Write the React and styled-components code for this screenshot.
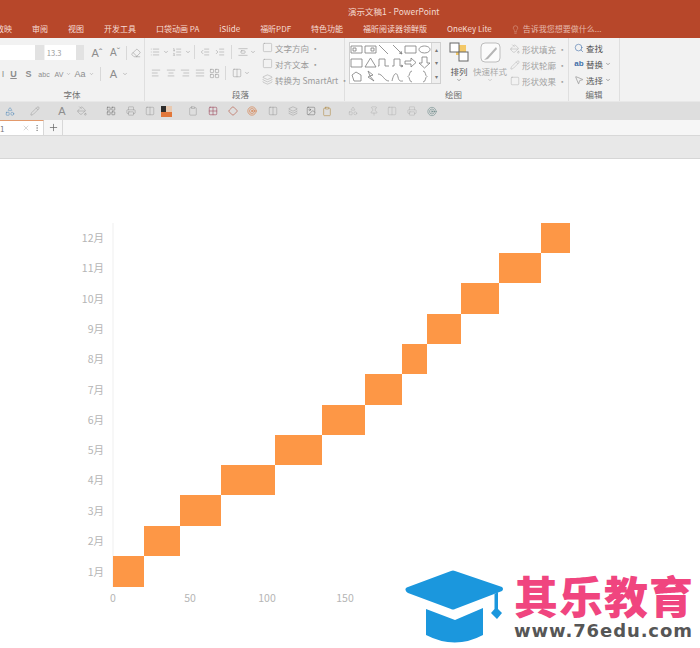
import React from 'react';
import styled, { createGlobalStyle } from 'styled-components';
import {
  List, ListOrdered, IndentDecrease, IndentIncrease, AlignLeft, AlignCenter, AlignRight, AlignJustify,
  Columns2, Lightbulb, Search, MousePointer2, PaintBucket, Pencil, Square, X, Plus, ChevronDown, EllipsisVertical,
  Eraser, LayoutGrid, Printer, Shapes, Target, Clipboard, Image, Layers, Diamond, Pin, Grid2x2, AlignVerticalSpaceAround,
} from 'lucide-react';

const GlobalStyle = createGlobalStyle`
  html, body { margin: 0; padding: 0; background: #fff; }
  body { font-family: "Noto Sans CJK SC", "Liberation Sans", sans-serif; overflow: hidden; }
`;

const Page = styled.div`
  position: relative;
  width: 700px;
  height: 648px;
  overflow: hidden;
  display: flex;
  flex-direction: column;
`;

const TitleBar = styled.header`
  height: 38px;
  flex: none;
  background: #b7472a;
  color: #f6ddd5;
  display: flex;
  flex-direction: column;
`;

const DocTitle = styled.div`
  height: 22px;
  padding-left: 348px;
  font-size: 8.5px;
  line-height: 23px;
  color: #f3d9d0;
`;

const Tabs = styled.nav`
  display: flex;
  gap: 20px;
  margin-left: -4px;
  font-size: 8px;
  line-height: 14px;
  white-space: nowrap;
`;

const TellMe = styled.span`
  display: flex;
  align-items: center;
  gap: 3px;
  margin-left: -1px;
  opacity: 0.75;
`;

const Ribbon = styled.section`
  height: 63px;
  flex: none;
  background: #f2f2f2;
  display: flex;
`;

const Group = styled.div`
  width: ${p => p.$w}px;
  flex: none;
  position: relative;
  display: flex;
  flex-direction: column;
  border-right: 1px solid #dfdfdf;
  box-sizing: border-box;
`;

const GroupBody = styled.div`
  height: 50px;
  display: flex;
  flex-direction: ${p => p.$dir || 'row'};
  padding: ${p => p.$pad || '0'};
  box-sizing: border-box;
`;

const GroupLabel = styled.div`
  height: 13px;
  font-size: 8.5px;
  line-height: 13px;
  color: #6f6f6f;
  text-align: center;
  padding-right: ${p => p.$shift || 0}px;
`;

const ToolRow = styled.div`
  display: flex;
  align-items: center;
  height: ${p => p.$h || 18}px;
  margin-top: ${p => p.$top || 0}px;
  color: #8a8a8a;
`;

const FontBox = styled.div`
  width: ${p => p.$w}px;
  height: 15px;
  background: #fff;
  font-size: 7.5px;
  line-height: 15px;
  color: #9a9a9a;
  padding-left: 2px;
  box-sizing: border-box;
`;

const BoxArrow = styled.div`
  width: 9px;
  height: 15px;
  background: #e2e2e2;
  margin-right: ${p => p.$after || 0}px;
`;

const Glyph = styled.span`
  font-family: "Liberation Sans", sans-serif;
  font-size: ${p => p.$size || 9}px;
  font-weight: ${p => (p.$bold ? 700 : 400)};
  color: ${p => p.$color || '#8d8d8d'};
  width: ${p => p.$w || 15}px;
  text-align: center;
  text-decoration: ${p => (p.$line ? 'underline' : 'none')};
  flex: none;
`;

const Sep = styled.i`
  display: block;
  width: 1px;
  height: 14px;
  background: #d8d8d8;
  margin: 0 ${p => p.$m || 4}px;
  flex: none;
`;

const Cell = styled.span`
  width: ${p => p.$w || 15}px;
  flex: none;
  display: flex;
  align-items: center;
  justify-content: ${p => p.$justify || 'center'};
  color: ${p => p.$color || '#8d8d8d'};
`;

const SideCommands = styled.div`
  display: flex;
  flex-direction: column;
  gap: 3px;
  padding-left: ${p => p.$left || 0}px;
`;

const SideCommand = styled.div`
  display: flex;
  align-items: center;
  gap: 2px;
  height: 13px;
  font-size: 8.5px;
  color: ${p => p.$color || '#a2a2a2'};
  white-space: nowrap;
`;

const Gallery = styled.div`
  width: 92px;
  height: 42px;
  flex: none;
  margin-left: 4px;
  background: #fff;
  border: 1px solid #cfcfcf;
  box-sizing: border-box;
  display: grid;
  grid-template-columns: repeat(6, 13.5px) 1fr;
  grid-template-rows: repeat(3, 1fr);
`;

const ShapeCell = styled.svg`
  grid-column: ${p => p.$col};
  grid-row: ${p => p.$row};
  width: 13px;
  height: 13px;
  align-self: center;
  justify-self: center;
  fill: none;
  stroke: #7c7c7c;
  stroke-width: 0.8;
`;

const Scroll = styled.div`
  grid-column: 7;
  grid-row: ${p => p.$row};
  background: #efefef;
  border-left: 1px solid #d6d6d6;
  font-size: 6px;
  line-height: 13px;
  text-align: center;
  color: #777;
`;

const BigCommand = styled.div`
  width: ${p => p.$w}px;
  flex: none;
  display: flex;
  flex-direction: column;
  align-items: center;
  font-size: 8.5px;
  line-height: 11px;
  color: ${p => p.$color};
  margin-left: ${p => p.$left || 0}px;
`;

const BigLabel = styled.div`
  margin-top: ${p => p.$top}px;
`;

const QuickBar = styled.div`
  height: 19px;
  flex: none;
  background: #dedede;
  border-top: 1px solid #e8e8e8;
  box-sizing: border-box;
  display: flex;
  align-items: center;
`;

const QuickItem = styled.span`
  width: 10px;
  height: 10px;
  flex: none;
  margin-left: ${p => p.$gap}px;
  display: flex;
  align-items: center;
  justify-content: center;
  color: ${p => p.$color || '#8a8a8a'};
`;

const Swatch = styled.span`
  width: 11px;
  height: 11px;
  flex: none;
  margin-left: 6px;
  background: linear-gradient(90deg, #2d2d2d 50%, #e9c9b0 50%);
  border-bottom: 5px solid #e2773a;
  box-sizing: border-box;
`;

const TabStrip = styled.div`
  height: 16px;
  flex: none;
  background: #f6f6f6;
  border-bottom: 1px solid #d8d8d8;
  box-sizing: border-box;
  display: flex;
`;

const SlideTab = styled.div`
  width: 44px;
  background: #fff;
  border-top: 1px solid #e39a6c;
  border-right: 1px solid #d8d8d8;
  box-sizing: border-box;
  display: flex;
  align-items: center;
  font-size: 8px;
  color: #777;
`;

const Kebab = styled.span`
  margin-left: 3px;
  display: flex;
  color: #777;
`;

const AddTab = styled.div`
  width: 18px;
  border-right: 1px solid #d8d8d8;
  display: flex;
  align-items: center;
  justify-content: center;
  color: #666;
`;

const GreyBand = styled.div`
  height: 23px;
  flex: none;
  background: #e8e8e8;
  border-bottom: 1px solid #d6d6d6;
  box-sizing: border-box;
`;

const Slide = styled.main`
  flex: 1;
  background: #fff;
`;

const ChartSvg = styled.svg`
  display: block;
  width: 700px;
  height: 489px;
  opacity: 0.99;
  text {
    font-family: "Noto Sans CJK SC", "Liberation Sans", sans-serif;
    font-size: 10.5px;
    fill: #b5b5b5;
  }
`;

const Watermark = styled.div`
  position: absolute;
  left: 405px;
  top: 570px;
  width: 295px;
  height: 74px;
  display: flex;
  gap: 9px;
`;

const CapIcon = styled.svg`
  flex: none;
  fill: #1b97dd;
`;

const BrandText = styled.div`
  display: flex;
  flex-direction: column;
`;

const BrandName = styled.div`
  font-size: 44px;
  line-height: 50px;
  font-weight: 900;
  letter-spacing: 1px;
  color: #f0457f;
  white-space: nowrap;
`;

const BrandUrl = styled.div`
  font-family: "DejaVu Sans", sans-serif;
  font-size: 18px;
  line-height: 22px;
  font-weight: 700;
  letter-spacing: 0.9px;
  color: #565656;
  white-space: nowrap;
`;

const tabNames = ['放映', '审阅', '视图', '开发工具', '口袋动画 PA', 'iSlide', '福昕PDF', '特色功能', '福昕阅读器领鲜版', 'OneKey Lite'];

const shapes = [
  'M1 3h11v7H1zM3 5h3v3H3z', 'M1 3h11v7H1zM7 5h3v3H7z', 'M2 2l9 9', 'M2 2l9 9M11 11l-3-1M11 11l-1-3', 'M1 3h11v7H1z', 'M6.5 3a5.5 3.5 0 1 0 .01 0z',
  'M1 3h11v8H1z', 'M6.5 2l5.5 9H1z', 'M1 10h1V3h6v7h4', 'M1 10h2V3h6v7h3M12 10l-2-1M12 10l-2 1', 'M1 5h6V2l5 4.5L7 11V8H1z', 'M4 1h5v6h3l-5.500 5L1 7h3z',
  'M2 5l4-3 5 3v6H4z', 'M4 1l5 4-3 1 4 5-6-4 2-1z', 'M1 4c5 0 6 7 11 7', 'M1 11c2-9 5-9 6-4s3 4 5 4', 'M8 1C5 1 6 6 4 6.500 6 7 5 12 8 12', 'M5 1c3 0 2 5 4 5.500C7 7 8 12 5 12',
];

const bars = [
  [113, 556, 31, 31], [144, 526, 36, 30], [180, 495, 41, 31], [221, 465, 54, 30],
  [275, 435, 47, 30], [322, 405, 43, 30], [365, 374, 37, 31], [402, 344, 25, 30],
  [427, 314, 34, 30], [461, 283, 38, 31], [499, 253, 42, 30], [541, 223, 29, 30],
];

const ticks = [[113, '0'], [190, '50'], [267, '100'], [345, '150']];

const Caret = () => <ChevronDown size={6} strokeWidth={2} />;

const FontGroup = () => (
  <Group $w={145}>
    <GroupBody $dir="column" $pad="7px 0 0">
      <ToolRow $h={15}>
        <FontBox $w={38} />
        <BoxArrow $after={1} />
        <FontBox $w={33}>13.3</FontBox>
        <BoxArrow $after={4} />
        <Glyph $size={11} $w={18}>Aˆ</Glyph>
        <Glyph $size={10} $w={18}>Aˇ</Glyph>
        <Sep $m={2} />
        <Cell $w={15}><Eraser size={10} strokeWidth={1.2} /></Cell>
      </ToolRow>
      <ToolRow $top={5}>
        <Glyph $w={6}>I</Glyph>
        <Glyph $line $w={15} $bold>U</Glyph>
        <Glyph $w={15} $bold>S</Glyph>
        <Glyph $size={7} $w={16}>abc</Glyph>
        <Glyph $size={7} $w={14}>AV</Glyph>
        <Cell $w={5}><Caret /></Cell>
        <Glyph $w={18}>Aa</Glyph>
        <Cell $w={5}><Caret /></Cell>
        <Sep $m={6} />
        <Glyph $size={11} $w={13}>A</Glyph>
        <Cell $w={10}><Caret /></Cell>
      </ToolRow>
    </GroupBody>
    <GroupLabel>字体</GroupLabel>
  </Group>
);

const ParagraphGroup = () => (
  <Group $w={200}>
    <GroupBody $pad="3px 0 0 4px">
      <div>
        <ToolRow $h={14} $top={4}>
          <Cell $w={12}><List size={10} strokeWidth={1.1} /></Cell>
          <Cell $w={9}><Caret /></Cell>
          <Cell $w={13}><ListOrdered size={10} strokeWidth={1.1} /></Cell>
          <Cell $w={9}><Caret /></Cell>
          <Sep $m={2} />
          <Cell $w={15}><IndentDecrease size={10} strokeWidth={1.1} /></Cell>
          <Cell $w={15}><IndentIncrease size={10} strokeWidth={1.1} /></Cell>
          <Sep $m={4} />
          <Cell $w={13}><AlignVerticalSpaceAround size={10} strokeWidth={1.1} /></Cell>
          <Cell $w={8}><Caret /></Cell>
        </ToolRow>
        <ToolRow $top={5}>
          <Cell $w={14.5}><AlignLeft size={10} strokeWidth={1.1} /></Cell>
          <Cell $w={14.5}><AlignCenter size={10} strokeWidth={1.1} /></Cell>
          <Cell $w={14.5}><AlignRight size={10} strokeWidth={1.1} /></Cell>
          <Cell $w={14.5}><AlignJustify size={10} strokeWidth={1.1} /></Cell>
          <Cell $w={14}><LayoutGrid size={11} strokeWidth={1.1} /></Cell>
          <Sep $m={4} />
          <Cell $w={14}><Columns2 size={10} strokeWidth={1.1} /></Cell>
          <Cell $w={6}><Caret /></Cell>
        </ToolRow>
      </div>
      <SideCommands $left={5}>
        <SideCommand $color="#9a9a9a"><Square size={11} strokeWidth={1} />文字方向 ·</SideCommand>
        <SideCommand $color="#9a9a9a"><Square size={11} strokeWidth={1} />对齐文本 ·</SideCommand>
        <SideCommand $color="#9a9a9a"><Layers size={11} strokeWidth={1} />转换为 SmartArt ·</SideCommand>
      </SideCommands>
    </GroupBody>
    <GroupLabel $shift={8}>段落</GroupLabel>
  </Group>
);

const DrawingGroup = () => (
  <Group $w={224}>
    <GroupBody $pad="4px 0 0 0">
      <Gallery>
        {shapes.map((d, i) => (
          <ShapeCell key={i} viewBox="0 0 13 13" $col={(i % 6) + 1} $row={Math.floor(i / 6) + 1}>
            <path d={d} />
          </ShapeCell>
        ))}
        <Scroll $row={1}>▴</Scroll>
        <Scroll $row={2}>▾</Scroll>
        <Scroll $row={3}>▾</Scroll>
      </Gallery>
      <BigCommand $w={24} $left={6} $color="#555">
        <svg width="20" height="20" viewBox="0 0 20 20">
          <rect x="7" y="3" width="10" height="10" fill="#f3c867" />
          <rect x="1" y="1" width="9" height="9" fill="#fff" stroke="#666" />
          <rect x="10" y="10" width="9" height="9" fill="#fff" stroke="#666" />
        </svg>
        <BigLabel $top={4}>排列</BigLabel>
        <Caret />
      </BigCommand>
      <BigCommand $w={34} $left={2} $color="#a8a8a8">
        <svg width="21" height="21" viewBox="0 0 21 21">
          <rect x="1" y="1" width="19" height="19" rx="4" fill="#fbfbfb" stroke="#bdbdbd" />
          <path d="M16 5L7 15l-3 3 4-1 9-10z" fill="#b5b5b5" />
        </svg>
        <BigLabel $top={3}>快速样式</BigLabel>
        <Caret />
      </BigCommand>
      <SideCommands $left={3}>
        <SideCommand><PaintBucket size={10} strokeWidth={1} />形状填充 ·</SideCommand>
        <SideCommand><Pencil size={10} strokeWidth={1} />形状轮廓 ·</SideCommand>
        <SideCommand><Square size={10} strokeWidth={1} />形状效果 ·</SideCommand>
      </SideCommands>
    </GroupBody>
    <GroupLabel $shift={6}>绘图</GroupLabel>
  </Group>
);

const EditGroup = () => (
  <Group $w={51}>
    <GroupBody $pad="3px 0 0 5px">
      <SideCommands>
        <SideCommand $color="#555"><Search size={10} strokeWidth={1.4} color="#3f6fa8" />查找</SideCommand>
        <SideCommand $color="#555"><Glyph $size={8} $w={10} $color="#3f6fa8" $bold>ab</Glyph>替换 <Caret /></SideCommand>
        <SideCommand $color="#555"><MousePointer2 size={10} strokeWidth={1} />选择 <Caret /></SideCommand>
      </SideCommands>
    </GroupBody>
    <GroupLabel>编辑</GroupLabel>
  </Group>
);

const QuickToolbar = () => (
  <QuickBar>
    <QuickItem $gap={5} $color="#4c86b8"><Shapes size={11} strokeWidth={1.2} /></QuickItem>
    <QuickItem $gap={15}><Pencil size={10} strokeWidth={1} /></QuickItem>
    <QuickItem $gap={17}><Glyph $size={11} $w={10}>A</Glyph></QuickItem>
    <QuickItem $gap={10}><PaintBucket size={10} strokeWidth={1} /></QuickItem>
    <QuickItem $gap={19}><LayoutGrid size={10} strokeWidth={1.2} color="#666" /></QuickItem>
    <QuickItem $gap={10}><Printer size={10} strokeWidth={1} /></QuickItem>
    <QuickItem $gap={9}><Columns2 size={10} strokeWidth={1} /></QuickItem>
    <Swatch />
    <QuickItem $gap={16}><Clipboard size={10} strokeWidth={1} /></QuickItem>
    <QuickItem $gap={10} $color="#a5586a"><Grid2x2 size={10} strokeWidth={1.6} /></QuickItem>
    <QuickItem $gap={10} $color="#b5533f"><Diamond size={10} strokeWidth={1.5} /></QuickItem>
    <QuickItem $gap={9} $color="#d5763f"><Target size={10} strokeWidth={1.5} /></QuickItem>
    <QuickItem $gap={11}><Columns2 size={10} strokeWidth={1} /></QuickItem>
    <QuickItem $gap={10}><Layers size={10} strokeWidth={1} /></QuickItem>
    <QuickItem $gap={8} $color="#555"><Image size={10} strokeWidth={1} /></QuickItem>
    <QuickItem $gap={6} $color="#b08a45"><Clipboard size={11} strokeWidth={1.4} /></QuickItem>
    <QuickItem $gap={16} $color="#aaa"><Shapes size={10} strokeWidth={1} /></QuickItem>
    <QuickItem $gap={11} $color="#aaa"><Pin size={10} strokeWidth={1} /></QuickItem>
    <QuickItem $gap={8} $color="#aaa"><Columns2 size={10} strokeWidth={1} /></QuickItem>
    <QuickItem $gap={10} $color="#aaa"><Printer size={10} strokeWidth={1} /></QuickItem>
    <QuickItem $gap={10} $color="#5b7d7d"><Target size={11} strokeWidth={1.2} /></QuickItem>
  </QuickBar>
);

const Chart = () => (
  <ChartSvg viewBox="0 159 700 489">
    <line x1="113" y1="223" x2="113" y2="587" stroke="#efefef" />
    {bars.map(([x, y, w, h], i) => (
      <g key={i}>
        <rect x={x} y={y} width={w} height={h} fill="#fd9644" />
        <text x="104" y={y + h / 2 + 4} textAnchor="end">{i + 1}月</text>
      </g>
    ))}
    {ticks.map(([x, label]) => (
      <text key={label} x={x} y="602" textAnchor="middle">{label}</text>
    ))}
  </ChartSvg>
);

const Logo = () => (
  <Watermark>
    <CapIcon width="100" height="74" viewBox="0 0 100 74">
      <path d="M0.500 20 Q0 18 3 17 L46 1 Q48 0 50 1 L97 17 Q99 19 97 21 L50 39 Q48 40 46 39 L3 23 Q1 22 0.500 20z" />
      <path d="M21 39 L50 50 L78 38 L78 65 Q50 80 21 65z" />
      <path d="M89.500 24 L93 22 L93 39 L97 43 L92 49 L86 43 L89.500 39z" />
    </CapIcon>
    <BrandText>
      <BrandName>其乐教育</BrandName>
      <BrandUrl>www.76edu.com</BrandUrl>
    </BrandText>
  </Watermark>
);

export default function App() {
  return (
    <Page>
      <GlobalStyle />
      <TitleBar>
        <DocTitle>演示文稿1 - PowerPoint</DocTitle>
        <Tabs>
          {tabNames.map(t => <span key={t}>{t}</span>)}
          <TellMe><Lightbulb size={9} strokeWidth={1.2} />告诉我您想要做什么...</TellMe>
        </Tabs>
      </TitleBar>
      <Ribbon>
        <FontGroup />
        <ParagraphGroup />
        <DrawingGroup />
        <EditGroup />
      </Ribbon>
      <QuickToolbar />
      <TabStrip>
        <SlideTab>
          <span>1</span>
          <Cell $w={26} $justify="flex-end" $color="#999"><X size={8} strokeWidth={1.2} /></Cell>
          <Kebab><EllipsisVertical size={8} strokeWidth={1.6} /></Kebab>
        </SlideTab>
        <AddTab><Plus size={11} strokeWidth={1.6} /></AddTab>
      </TabStrip>
      <GreyBand />
      <Slide>
        <Chart />
      </Slide>
      <Logo />
    </Page>
  );
}
